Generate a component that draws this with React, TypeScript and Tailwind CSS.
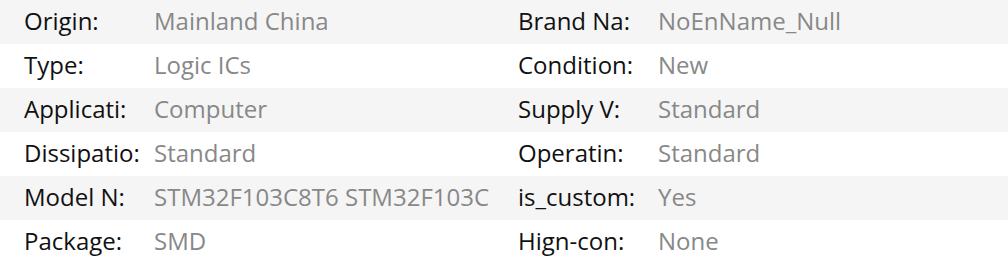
const rows: [string, string, string, string][] = [
  ["Origin:", "Mainland China", "Brand Na:", "NoEnName_Null"],
  ["Type:", "Logic ICs", "Condition:", "New"],
  ["Applicati:", "Computer", "Supply V:", "Standard"],
  ["Dissipatio:", "Standard", "Operatin:", "Standard"],
  ["Model N:", "STM32F103C8T6 STM32F103C", "is_custom:", "Yes"],
  ["Package:", "SMD", "Hign-con:", "None"],
];

export default function App() {
  return (
    <div className="w-[1008px] h-[264px] bg-white font-['Open_Sans',sans-serif] text-[24px] leading-[32px]">
      {rows.map((r, i) => (
        <div
          key={i}
          className={`flex h-[44px] items-center pl-6 pb-[2px] ${i % 2 === 0 ? "bg-[#f5f5f5]" : "bg-white"}`}
        >
          <div className="w-[130px] shrink-0 whitespace-nowrap text-[#111]">{r[0]}</div>
          <div className="w-[354px] shrink-0 whitespace-nowrap overflow-hidden text-[#888]">{r[1]}</div>
          <div className="w-[140px] shrink-0 ml-[10px] whitespace-nowrap text-[#111]">{r[2]}</div>
          <div className="whitespace-nowrap text-[#888]">{r[3]}</div>
        </div>
      ))}
    </div>
  );
}
